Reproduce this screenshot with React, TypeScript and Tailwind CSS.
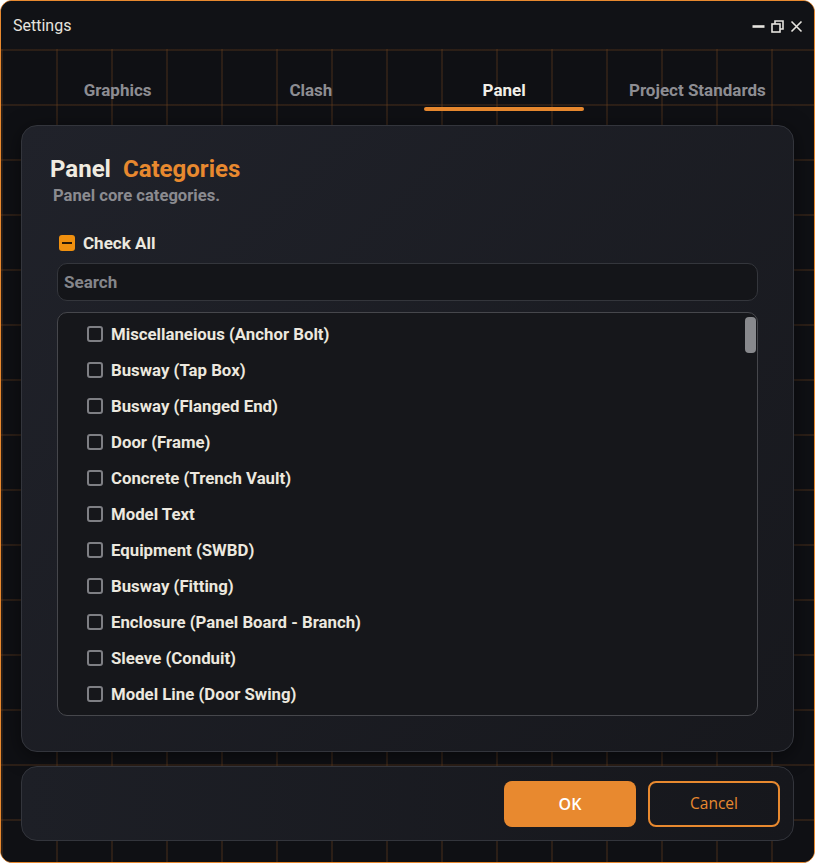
import React from "react";

const items = [
  "Miscellaneious (Anchor Bolt)",
  "Busway (Tap Box)",
  "Busway (Flanged End)",
  "Door (Frame)",
  "Concrete (Trench Vault)",
  "Model Text",
  "Equipment (SWBD)",
  "Busway (Fitting)",
  "Enclosure (Panel Board - Branch)",
  "Sleeve (Conduit)",
  "Model Line (Door Swing)",
];

const tabs = ["Graphics", "Clash", "Panel", "Project Standards"];

export default function App() {
  return (
    <div className="w-[815px] h-[863px] bg-white">
      <div
        className="w-[815px] h-[863px] rounded-[12px] border border-[#e8892f] overflow-hidden flex flex-col bg-[#0f1014]"
        style={{ fontFamily: "Roboto, 'Noto Sans', sans-serif" }}
      >
        {/* Title bar */}
        <div className="h-[48px] shrink-0 bg-[#111216] flex items-center justify-between pl-[12px] pr-[11px] pt-[2px]">
          <span className="text-[16px] text-[#e6e4df]">Settings</span>
          <div className="flex items-center gap-[6px] text-[#e6e4df]">
            <svg width="13" height="13" viewBox="0 0 13 13">
              <rect x="0.5" y="5.2" width="12" height="2.6" fill="#e6e4df" />
            </svg>
            <svg width="13" height="13" viewBox="0 0 13 13" fill="none" stroke="#e6e4df" strokeWidth="1.6">
              <rect x="1" y="4" width="8" height="8" />
              <path d="M4 4V1h8v8H9" />
            </svg>
            <svg width="13" height="13" viewBox="0 0 13 13" fill="none" stroke="#e6e4df" strokeWidth="1.6">
              <path d="M1.5 1.5l10 10M11.5 1.5l-10 10" />
            </svg>
          </div>
        </div>

        {/* Content */}
        <div className="flex-1 flex flex-col bg-[#0f1014] bg-[linear-gradient(rgba(120,70,30,0.27)_2px,transparent_2px),linear-gradient(90deg,rgba(120,70,30,0.27)_2px,transparent_2px)] bg-[size:55px_55px] pb-[21px]">
          {/* Tabs */}
          <div className="mx-[20px] grid grid-cols-4 pt-[29px]">
            {tabs.map((t) => {
              const active = t === "Panel";
              return (
                <div key={t} className="flex flex-col items-center">
                  <span
                    className={
                      "text-[17px] leading-[24px] font-bold " +
                      (active ? "text-[#f2efe8]" : "text-[#8d8d92]")
                    }
                  >
                    {t}
                  </span>
                  <div
                    className={
                      "mt-[5px] h-[4px] w-[160px] rounded-full " +
                      (active ? "bg-[#e8892f]" : "bg-transparent")
                    }
                  />
                </div>
              );
            })}
          </div>

          {/* Card */}
          <div className="mx-[20px] mt-[14px] rounded-[16px] border border-[#33353c] bg-[linear-gradient(135deg,#20222a,#17181d)] px-[35px] pt-[29px] pb-[35px] shadow-[0_4px_20px_rgba(0,0,0,0.5)]">
            <div className="ml-[-7px] flex items-center gap-[12px] text-[24px] leading-[28px] font-bold">
              <span className="text-[#f0ebe0]">Panel</span>
              <span className="text-[#e8892f]">Categories</span>
            </div>
            <div className="ml-[-4px] mt-[2px] pt-[1px] text-[16.6px] leading-[20px] font-bold text-[#8b8b90]">
              Panel core categories.
            </div>
            <div className="ml-[2px] mt-[25px] h-[24px] flex items-center gap-[8px]">
              <div className="w-[16px] h-[16px] rounded-[3px] bg-[#f0900f] flex items-center justify-center">
                <div className="w-[10px] h-[2px] bg-[#2a1a08]" />
              </div>
              <span className="text-[17px] font-bold text-[#ece8df] pt-[1px]">Check All</span>
            </div>
            <div className="mt-[8px] h-[38px] rounded-[10px] border border-[#34363c] bg-[#141519] flex items-center px-[6px] pt-[1px]">
              <span className="text-[17px] font-bold text-[#85868b]">Search</span>
            </div>
            <div className="relative mt-[11px] h-[404px] rounded-[10px] border border-[#46474c] bg-[#16171b] overflow-hidden">
              <div className="pt-[3px] pl-[29px]">
                {items.map((it) => (
                  <div key={it} className="h-[36px] flex items-center gap-[8px]">
                    <div className="w-[16px] h-[16px] rounded-[3px] border-2 border-[#7e7f84]" />
                    <span className="text-[16.8px] font-bold text-[#ece8df] pt-[2px]">{it}</span>
                  </div>
                ))}
              </div>
              <div className="absolute right-[1px] top-[4px] w-[11px] h-[36px] rounded-[4px] bg-[#88898d]" />
            </div>
          </div>

          {/* Footer */}
          <div className="mx-[20px] mt-[14px] h-[75px] rounded-[16px] border border-[#33353c] bg-[linear-gradient(90deg,#1d1f26,#16171c)] flex items-center justify-end gap-[12px] pr-[13px]">
            <button
              className="w-[132px] h-[46px] rounded-[8px] bg-[#e8892f] text-white text-[16px] font-semibold"
              style={{ fontFamily: "'Open Sans', sans-serif" }}
            >
              OK
            </button>
            <button
              className="w-[132px] h-[46px] rounded-[8px] border-2 border-[#e8892f] text-[#e8892f] text-[15.5px] font-medium"
              style={{ fontFamily: "'Open Sans', sans-serif" }}
            >
              Cancel
            </button>
          </div>
        </div>
      </div>
    </div>
  );
}
